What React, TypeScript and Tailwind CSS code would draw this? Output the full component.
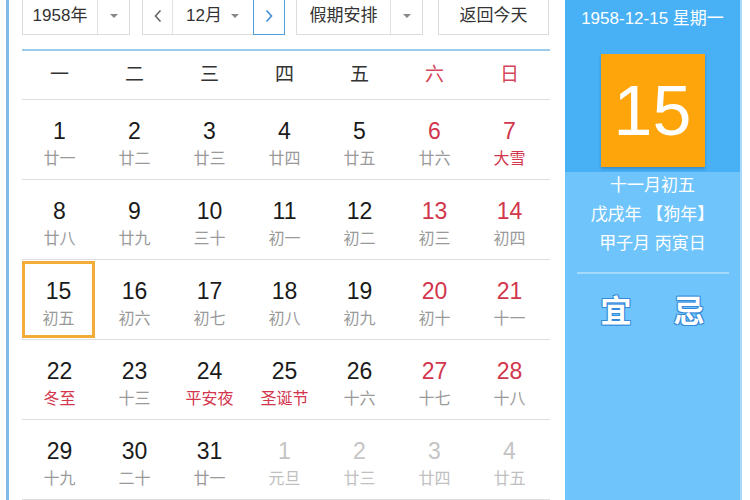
import React from 'react';

type Day = { d: number; lunar: string; weekend?: boolean; festival?: boolean; other?: boolean; today?: boolean };

const weekdays = ['一', '二', '三', '四', '五', '六', '日'];

const rows: Day[][] = [
  [
    { d: 1, lunar: '廿一' },
    { d: 2, lunar: '廿二' },
    { d: 3, lunar: '廿三' },
    { d: 4, lunar: '廿四' },
    { d: 5, lunar: '廿五' },
    { d: 6, lunar: '廿六', weekend: true },
    { d: 7, lunar: '大雪', weekend: true, festival: true },
  ],
  [
    { d: 8, lunar: '廿八' },
    { d: 9, lunar: '廿九' },
    { d: 10, lunar: '三十' },
    { d: 11, lunar: '初一' },
    { d: 12, lunar: '初二' },
    { d: 13, lunar: '初三', weekend: true },
    { d: 14, lunar: '初四', weekend: true },
  ],
  [
    { d: 15, lunar: '初五', today: true },
    { d: 16, lunar: '初六' },
    { d: 17, lunar: '初七' },
    { d: 18, lunar: '初八' },
    { d: 19, lunar: '初九' },
    { d: 20, lunar: '初十', weekend: true },
    { d: 21, lunar: '十一', weekend: true },
  ],
  [
    { d: 22, lunar: '冬至', festival: true },
    { d: 23, lunar: '十三' },
    { d: 24, lunar: '平安夜', festival: true },
    { d: 25, lunar: '圣诞节', festival: true },
    { d: 26, lunar: '十六' },
    { d: 27, lunar: '十七', weekend: true },
    { d: 28, lunar: '十八', weekend: true },
  ],
  [
    { d: 29, lunar: '十九' },
    { d: 30, lunar: '二十' },
    { d: 31, lunar: '廿一' },
    { d: 1, lunar: '元旦', other: true },
    { d: 2, lunar: '廿三', other: true },
    { d: 3, lunar: '廿四', other: true },
    { d: 4, lunar: '廿五', other: true },
  ],
];

function Caret() {
  return (
    <svg width="10" height="6" viewBox="0 0 10 6">
      <path d="M1 1 L5 5 L9 1 Z" fill="#888" />
    </svg>
  );
}

function Chevron({ dir, color }: { dir: 'left' | 'right'; color: string }) {
  return (
    <svg width="10" height="14" viewBox="0 0 10 14">
      <path
        d={dir === 'left' ? 'M7.5 1.5 L2.5 7 L7.5 12.5' : 'M2.5 1.5 L7.5 7 L2.5 12.5'}
        fill="none"
        stroke={color}
        strokeWidth="1.6"
      />
    </svg>
  );
}

function DayCell({ day }: { day: Day }) {
  const numColor = day.other ? 'text-[#c4c4c4]' : day.weekend ? 'text-[#d2364c]' : 'text-[#1a1a1a]';
  const lunarColor = day.other ? 'text-[#c0c0c0]' : day.festival ? 'text-[#d2364c]' : 'text-[#9a9a9a]';
  const inner = (
    <>
      <span className={`text-[23px] leading-[24px] ${numColor}`}>{day.d}</span>
      <span className={`mt-[6px] text-[16px] leading-[20px] ${lunarColor}`}>{day.lunar}</span>
    </>
  );
  if (day.today) {
    return (
      <div className="w-[75px] h-[79px] flex pt-[1px]">
        <div className="w-[73px] h-[77px] border-[3px] border-[#f1ad37] flex flex-col items-center pt-[15px]">
          {inner}
        </div>
      </div>
    );
  }
  return <div className="w-[75px] h-[79px] flex flex-col items-center pt-[19px]">{inner}</div>;
}

export default function App() {
  return (
    <div
      className="w-[750px] h-[500px] flex bg-white overflow-hidden"
      style={{ fontFamily: '"Liberation Sans", "Noto Sans CJK SC", sans-serif' }}
    >
      <div className="w-[3px] ml-[6px] h-full bg-[#7fbbe6]" />

      <div className="w-[556px] pl-[13px] pr-[15px] flex flex-col">
        {/* toolbar */}
        <div className="-mt-[3px] h-[38px] flex text-[17px] text-[#333]">
          <div className="w-[108px] flex border border-[#dcdcdc] bg-white">
            <div className="flex-1 flex items-center justify-center">1958年</div>
            <div className="w-[32px] border-l border-[#e2e2e2] flex items-center justify-center">
              <Caret />
            </div>
          </div>

          <div className="ml-[12px] w-[143px] flex border border-[#dcdcdc]">
            <div className="w-[30px] border-r border-[#e2e2e2] flex items-center justify-center">
              <Chevron dir="left" color="#666" />
            </div>
            <div className="flex-1 flex items-center justify-center gap-[8px]">
              <span>12月</span>
              <Caret />
            </div>
            <div className="w-[32px] border border-[#4f9fdc] flex items-center justify-center -my-px -mr-px">
              <Chevron dir="right" color="#3d8fd6" />
            </div>
          </div>

          <div className="ml-[11px] w-[127px] flex border border-[#dcdcdc]">
            <div className="flex-1 flex items-center justify-center">假期安排</div>
            <div className="w-[32px] border-l border-[#e2e2e2] flex items-center justify-center">
              <Caret />
            </div>
          </div>

          <div className="ml-[15px] w-[111px] border border-[#dcdcdc] flex items-center justify-center">
            返回今天
          </div>
        </div>

        <div className="mt-[14px] h-[2px] bg-[#9ccce9]" />

        {/* weekday header */}
        <div className="h-[49px] flex border-b border-[#dedede]">
          {weekdays.map((w, i) => (
            <div
              key={w}
              className={`w-[75px] flex items-center justify-center text-[19px] ${
                i >= 5 ? 'text-[#d6455a]' : 'text-[#333]'
              }`}
            >
              {w}
            </div>
          ))}
        </div>

        {rows.map((row, ri) => (
          <div key={ri} className="flex border-b border-[#dedede]">
            {row.map((day, di) => (
              <DayCell key={di} day={day} />
            ))}
          </div>
        ))}
      </div>

      {/* side panel */}
      <div className="w-[177px] h-full flex flex-col border-r-2 border-[#a9d8f8] text-white">
        <div className="h-[172px] bg-[#48b0f5] flex flex-col items-center">
          <div className="mt-[8px] text-[17px] leading-[22px]">1958-12-15 星期一</div>
          <div className="mt-[24px] w-[104px] h-[113px] bg-[#fea50c] shadow-[0_2px_3px_rgba(0,0,0,0.2)] flex items-center justify-center">
            <span className="text-[70px] leading-none">15</span>
          </div>
        </div>
        <div className="flex-1 bg-[#6fc4fb] flex flex-col items-center">
          <div className="mt-[-1px] text-[17px] leading-[29px]">十一月初五</div>
          <div className="text-[17px] leading-[29px]">戊戌年 【狗年】</div>
          <div className="text-[17px] leading-[29px]">甲子月 丙寅日</div>
          <div className="mt-[14px] w-[152px] h-[2px] bg-[#a6dafc]" />
          <div className="mt-[20px] flex gap-[42px] text-[31px] leading-[36px] font-bold [text-shadow:1px_1px_0_#3489d8,-1px_-1px_0_#3489d8,1px_-1px_0_#3489d8,-1px_1px_0_#3489d8]">
            <span>宜</span>
            <span>忌</span>
          </div>
        </div>
      </div>
    </div>
  );
}
